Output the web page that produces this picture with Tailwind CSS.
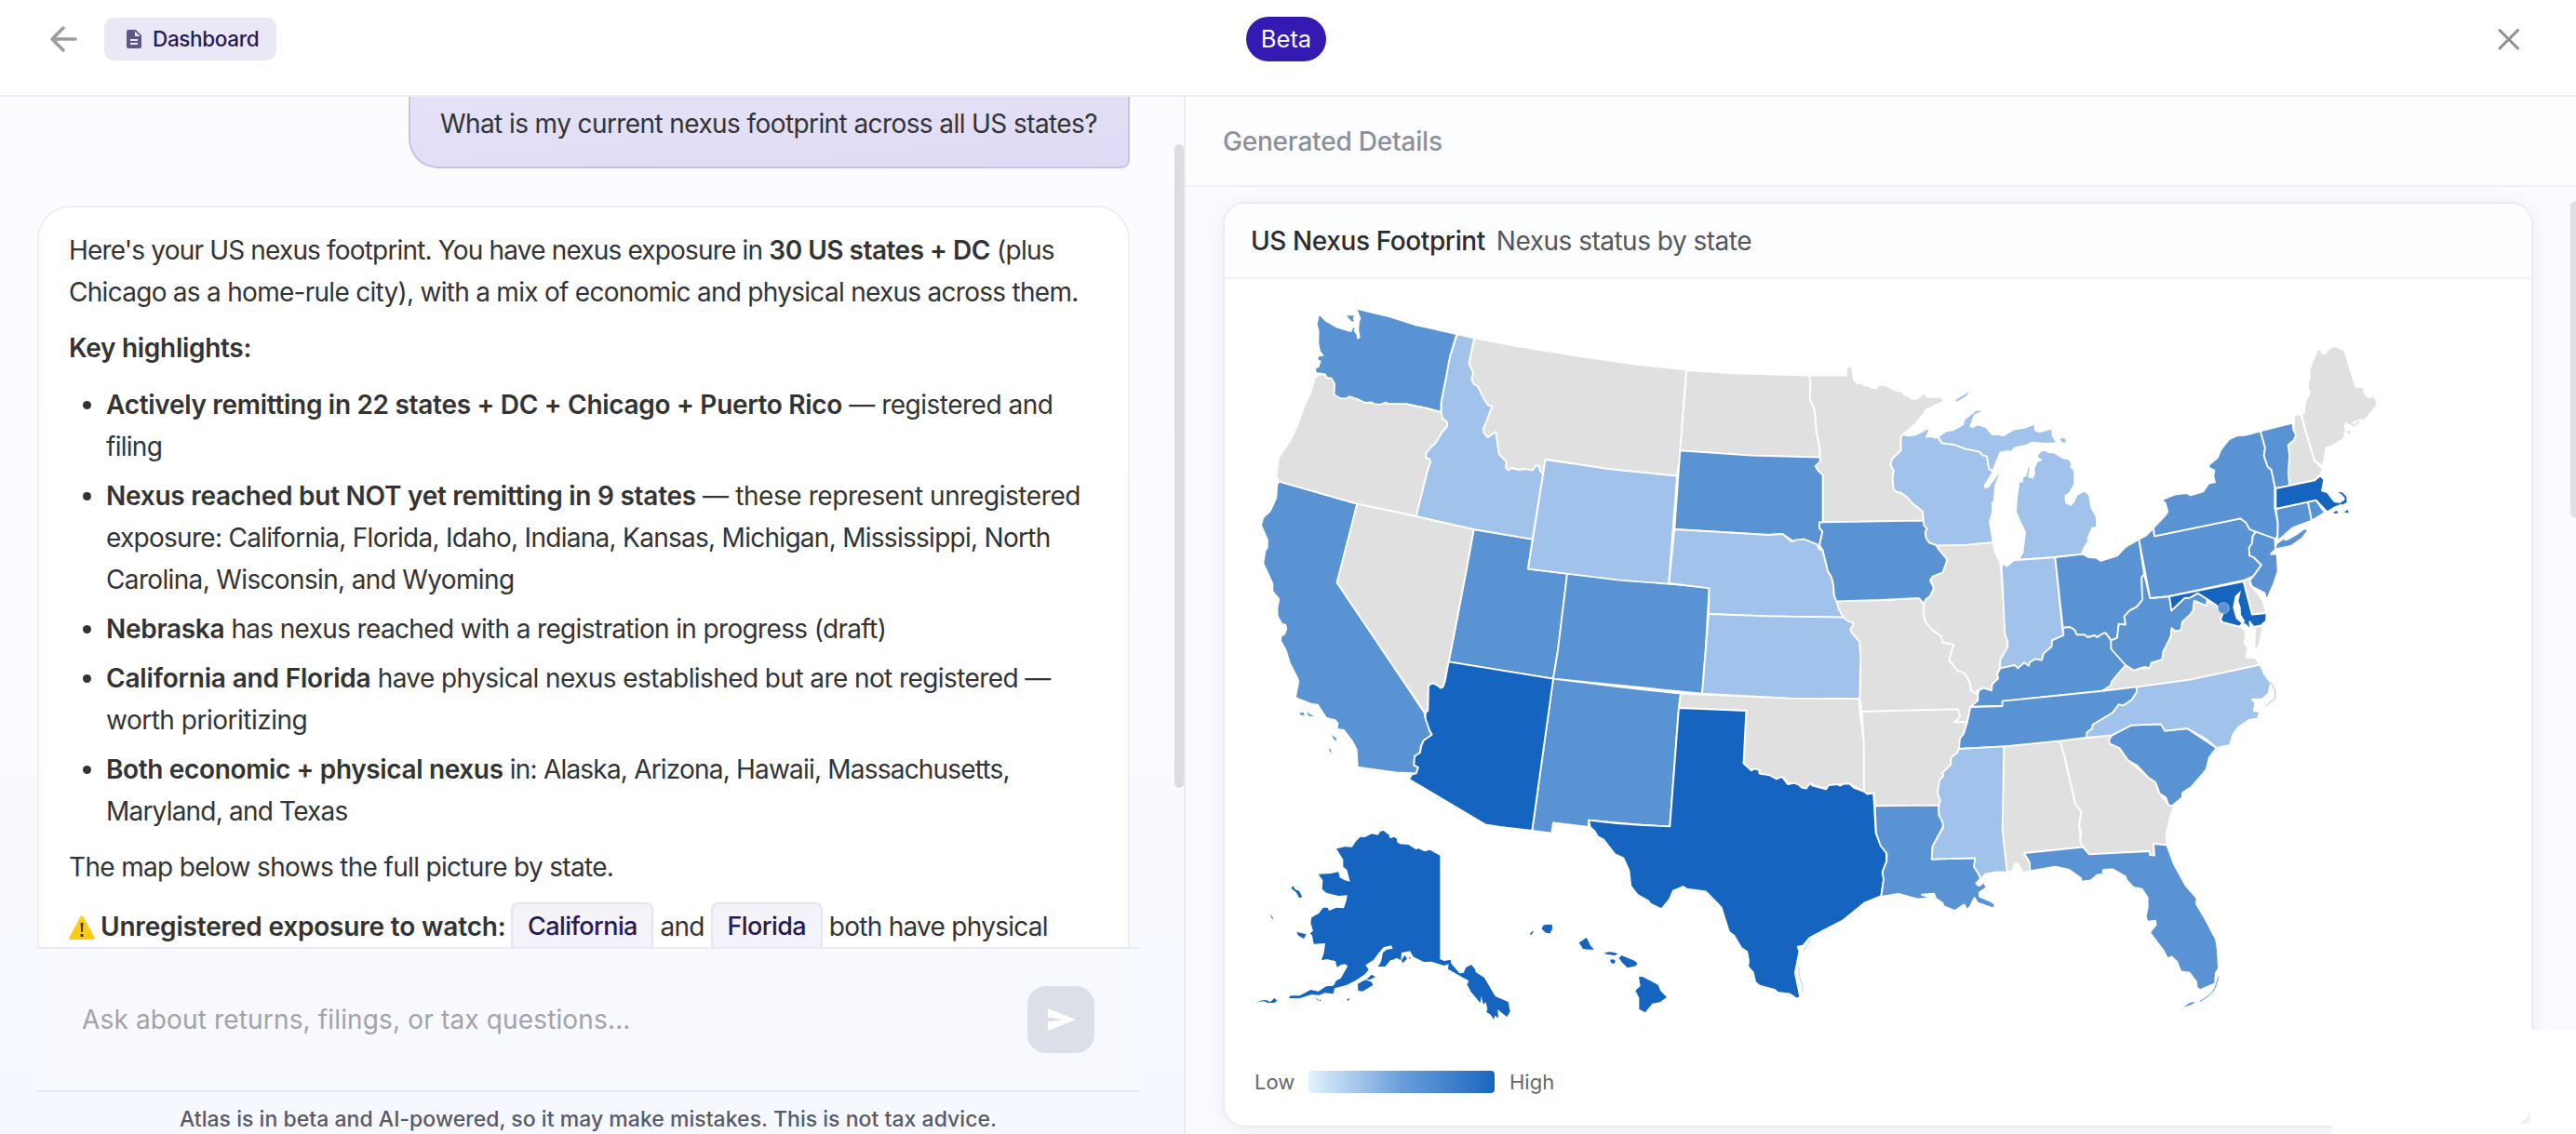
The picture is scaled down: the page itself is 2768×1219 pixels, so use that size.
<!DOCTYPE html>
<html lang="en">
<head>
  <meta charset="UTF-8" />
  <meta name="viewport" content="width=device-width, initial-scale=1" />
  <title>Atlas - US Nexus Footprint</title>
  <script src="https://cdn.jsdelivr.net/npm/@tailwindcss/browser@4"></script>
</head>
<body class="h-[1219px] w-[2768px] overflow-hidden bg-white font-['Inter','Liberation_Sans',sans-serif] text-[28px] text-[#333333] flex flex-col">
  <header class="relative h-[104px] shrink-0 border-b-2 border-[#eeeeee] bg-white flex items-start justify-between pl-[52px] pr-[59px] pt-[18px]">
    <div class="flex items-center gap-[28px]">
      <svg class="w-8 h-12" viewBox="0 0 32 48" fill="none" stroke="#9b9ba1" stroke-width="3.500" stroke-linecap="round" stroke-linejoin="round"><path d="M29 24H4M16 12L4 24l12 12" /></svg>
      <a class="flex h-[46px] w-[185px] items-center gap-[12px] rounded-[10px] bg-[#eae7f6] pl-6 text-[22.5px] font-medium text-[#241b58]">
        <svg class="w-4 h-5 shrink-0" viewBox="0 0 16 20"><path fill="#5f5785" fill-rule="evenodd" d="M2 0h8l6 6v12a2 2 0 0 1-2 2H2a2 2 0 0 1-2-2V2a2 2 0 0 1 2-2zM9 1.500V7h5.500zM4 10v2h8v-2zM4 14v2h8v-2z" /></svg>
        <span class="tracking-[-0.35px]">Dashboard</span>
      </a>
    </div>
    <span class="absolute left-[1339px] top-[18px] flex h-12 w-[86px] items-center justify-center rounded-full bg-[#3519b3] text-[25.5px] text-white">Beta</span>
    <svg class="w-[27px] h-12" viewBox="0 0 27 48" fill="none" stroke="#8d8d93" stroke-width="3" stroke-linecap="round"><path d="M4 14.500l19.500 19.500M23.500 14.500L4 34" /></svg>
  </header>

  <main class="flex min-h-0 flex-1">
    <!-- chat -->
    <section class="relative flex w-[1274px] shrink-0 flex-col border-r-2 border-[#ebebef] bg-linear-to-b from-[#fcfcff] via-[#fafbff] to-[#f5f8ff] pl-10">
      <div class="flex h-[914px] shrink-0 flex-col overflow-hidden">
        <div class="ml-[399px] h-[77px] w-[775px] shrink-0 rounded-bl-[32px] rounded-br-[9px] border-2 border-t-0 border-[#c8c1ee] bg-linear-to-br from-[#e5e2f7] to-[#dfdbf5] pl-[32px] pt-[7px] leading-[44.800px]">
          <p class="whitespace-nowrap tracking-[-0.59px]">What is my current nexus footprint across all US states?</p>
        </div>
        <div class="mt-[40px] h-[900px] w-[1174px] shrink-0 rounded-[36px] border-2 border-[#efefef] bg-white px-8 pt-[24px] leading-[44.800px] tracking-[-0.72px] whitespace-nowrap">
          <p><span class="tracking-[-0.83px]">Here's your US nexus footprint. You have nexus exposure in</span> <b class="font-semibold tracking-[-0.5px]">30 US states + DC</b> (plus<br />Chicago as a home-rule city), with a mix of economic and physical nexus across them.</p>
          <p class="mt-[15px] font-semibold tracking-[-0.3px]">Key highlights:</p>
          <ul class="mt-[17px] flex flex-col gap-[8.400px] pl-10 list-disc">
            <li><b class="font-semibold tracking-[-0.3px]">Actively remitting in 22 states + DC + Chicago + Puerto Rico</b> <span class="tracking-[-0.5px]">— registered and</span><br />filing</li>
            <li><b class="font-semibold tracking-[-0.26px]">Nexus reached but NOT yet remitting in 9 states</b> <span class="tracking-[-0.42px]">— these represent unregistered</span><br />exposure: California, Florida, Idaho, Indiana, Kansas, Michigan, Mississippi, North<br /><span class="tracking-[-0.65px]">Carolina, Wisconsin, and Wyoming</span></li>
            <li><b class="font-semibold tracking-[-0.3px]">Nebraska</b> <span class="tracking-[-0.65px]">has nexus reached with a registration in progress (draft)</span></li>
            <li><b class="font-semibold tracking-[-0.18px]">California and Florida</b> <span class="tracking-[-0.58px]">have physical nexus established but are not registered —</span><br /><span class="tracking-[-0.5px]">worth prioritizing</span></li>
            <li><b class="font-semibold tracking-[-0.36px]">Both economic + physical nexus</b> <span class="tracking-[-0.8px]">in: Alaska, Arizona, Hawaii, Massachusetts,<br />Maryland, and Texas</span></li>
          </ul>
          <p class="mt-[15px] tracking-[-0.67px]">The map below shows the full picture by state.</p>
          <div class="mt-[15px] flex items-center">
            <svg class="mr-[6px] w-[28px] h-[26px]" viewBox="0 0 28 26"><path fill="#ffcc12" d="M12.700 1q1.300-1.800 2.600 0L27.500 23.500q.8 2.300-1.500 2.500H2Q-.3 25.800.5 23.500z" /><path fill="#333" d="M12.600 8h2.800l-.5 10h-1.800zM12.600 20h2.800v3h-2.800z" /></svg>
            <b class="font-semibold tracking-[-0.18px]">Unregistered exposure to watch:</b>
            <span class="ml-[6px] flex h-[54px] w-[153px] items-center justify-center rounded-lg border-2 border-[#e6e4ee] bg-[#f5f3fa] text-[27px] font-medium tracking-[-0.6px] text-[#241b58]">California</span>
            <span class="ml-[7px]">and</span>
            <span class="ml-[7px] flex h-[54px] w-[120px] items-center justify-center rounded-lg border-2 border-[#e6e4ee] bg-[#f5f3fa] text-[27px] font-medium tracking-[-0.6px] text-[#241b58]">Florida</span>
            <span class="ml-[7px]">both have physical</span>
          </div>
        </div>
      </div>
      <form class="flex h-[156px] w-[1184px] shrink-0 items-center justify-between border-y-2 border-[#e9ecf5] bg-[#f7f9ff] pl-12 pr-[48px]">
        <span class="tracking-[0.150px] text-[#a3a3a8]">Ask about returns, filings, or tax questions...</span>
        <button type="button" class="flex h-[72px] w-[72px] items-center justify-center rounded-[20px] bg-[#dddfe8]">
          <svg class="ml-[2px] w-[30px] h-6" viewBox="0 0 30 24"><path fill="#fff" d="M0 0l30 12L0 24v-9.500L16 12 0 9.500z" /></svg>
        </button>
      </form>
      <p class="w-[1184px] pt-[11px] text-center text-[23px] leading-[36px] font-medium tracking-[0.030px] text-[#5a5a64]">Atlas is in beta and AI-powered, so it may make mistakes. This is not tax advice.</p>
      <div class="absolute right-0 top-[51px] h-[692px] w-[10px] rounded-full bg-[#dcdddf]"></div>
    </section>

    <!-- generated details -->
    <section class="relative flex min-w-0 flex-1 flex-col bg-[#fafbff]">
      <h2 class="flex h-[97px] shrink-0 items-center border-b-2 border-[#f0f0f2] bg-[#fcfdff] pl-10 font-medium tracking-[-0.2px] text-[#8f8f9c]">Generated Details</h2>
      <div class="ml-10 mt-4 flex h-[995px] w-[1408px] shrink-0 flex-col overflow-hidden rounded-[24px] border-2 border-[#ededf0] bg-white shadow-[0_2px_20px_rgba(40,40,90,0.06)]">
        <div class="flex h-[81px] shrink-0 items-center gap-[12px] border-b-2 border-[#f0f0f2] bg-[#fcfdff] pl-7">
          <h3 class="font-medium tracking-[-0.4px] text-[#2c2c30]">US Nexus Footprint</h3>
          <span class="tracking-[-0.5px] text-[#55555c]">Nexus status by state</span>
        </div>
        <svg class="block w-[1402px] h-[810px] shrink-0" viewBox="-72 3 4206 2430" stroke="#ffffff" stroke-width="5.500" stroke-linejoin="round">
          <!-- north west -->
          <g fill="#5a93d4">
            <path d="M102 655L250 698 355 728 290 982 437 1200 572 1402 575 1420 585 1440 588 1460 596 1472 590 1480 570 1490 560 1510 558 1530 540 1542 538 1570 552 1578 545 1597 480 1594 356 1577 353 1520 340 1495 312 1458 290 1455 292 1435 285 1426 255 1418 240 1395 228 1376 210 1374 160 1355 156 1350 166 1300 160 1285 137 1240 125 1200 108 1170 109 1155 120 1148 127 1132 124 1118 112 1115 98 1090 97 1065 103 1035 82 1010 82 985 52 920 58 880 65 870 66 845 45 796 52 772 75 750 94 708 96 670Z" />
            <path stroke="none" d="M170 1402l12-1 3 8-12 0zM191 1399l14 8 11 5-16 0zM273 1473l14 10 0 10-7-6zM265 1515l4 4 4 13-8-9z" />
            <path d="M352 98L400 110 460 124 540 150 676 180 655 250 640 330 626 400 626 432 580 420 515 406 452 405 448 401 428 408 410 406 402 401 380 402 355 390 330 382 322 390 300 388 280 376 280 340 272 324 256 320 252 310 235 307 225 308 219 298 221 288 230 286 236 268 226 264 228 250 244 249 234 236 229 210 230 170 224 150 230 120 236 118 255 138 290 158 335 171 340 158 350 152 347 170 355 180 357 194 362 190 358 168 360 140 364 130Z" />
            <path stroke="none" d="M321 121l24 0-4 8 4 11-9-2-6-7z" />
            <path d="M731 810L920 842 906 938 1032 953 1002 1200 987 1292 650 1237 675 1110Z" />
            <path d="M1032 953L1359 986 1490 998 1478 1200 1467 1340 987 1292 1002 1200Z" />
            <path d="M987 1292L1200 1318 1398 1340 1392 1386 1363 1768 1277 1764 1101 1748 1101 1770 987 1756 982 1790 919 1782Z" />
          </g>
          <g fill="#e0e0e0">
            <path d="M219 320L235 310 252 312 256 322 272 324 282 340 280 376 300 388 322 388 330 382 355 390 380 402 402 401 410 406 428 408 448 401 452 405 515 406 580 420 626 434 630 452 645 464 645 478 628 498 608 532 592 546 578 564 576 579 586 582 592 592 582 620 545 768 355 728 250 698 102 655 94 640 101 580 140 522 165 468 186 408 204 370Z" />
            <path d="M355 728L545 768 731 810 700 980 650 1237 638 1300 632 1318 624 1322 612 1312 598 1306 585 1314 583 1395 574 1402 437 1200 290 982Z" />
            <path d="M734 193L860 218 1060 250 1240 276 1416 296 1397 556 1386 638 1170 616 962 585 954 632 944 620 940 604 930 606 920 620 895 615 875 618 852 612 842 620 834 612 836 592 812 568 802 496 776 514 762 498 762 485 790 414 778 410 765 392 743 348 731 342 724 325 729 305 715 275Z" />
          </g>
          <g fill="#a0c2eb">
            <path d="M678 181L732 193 715 275 729 305 724 325 731 342 743 348 765 392 778 410 790 414 762 485 762 498 776 514 802 496 812 568 836 592 834 612 842 620 852 612 875 618 895 615 920 620 930 606 940 604 944 620 954 632 920 842 731 810 545 768 582 620 592 592 586 582 576 579 578 564 592 546 608 532 628 498 645 478 645 464 630 452 626 434 626 400 640 330 655 250Z" />
            <path d="M962 585L1170 616 1386 638 1359 986 1200 974 1030 953 906 938Z" />
          </g>
          <path fill="#1565c0" d="M650 1237L987 1292 919 1782 816 1770 768 1762 522 1616 532 1600 545 1597 552 1578 538 1570 540 1542 558 1530 562 1508 570 1490 596 1472 588 1458 575 1420 575 1402 583 1395 585 1314 598 1306 612 1312 624 1322 632 1318 638 1300Z" />

          <!-- plains and upper midwest -->
          <g transform="translate(1200 120)">
            <g fill="#e0e0e0">
              <path d="M217 177L370 187 612 194 617 215 614 270 630 305 636 380 646 425 647 458 425 452 196 436Z" />
              <path d="M612 194L732 194 733 162 750 167 757 210 765 218 785 220 787 226 808 228 812 234 828 234 838 224 862 227 890 242 912 246 918 255 935 262 945 270 960 268 978 254 988 254 992 264 1036 262 1042 270 1062 268 1040 280 990 304 960 345 915 384 908 392 908 436 880 462 874 482 885 500 881 520 884 560 895 570 908 572 930 588 945 606 978 632 980 662 656 667 656 515 640 500 632 486 647 472 646 425 636 380 630 305 614 270 617 215Z" />
              <path d="M700 922L845 918 965 912 982 930 980 960 988 990 1010 1015 1038 1035 1042 1054 1078 1062 1063 1112 1090 1145 1115 1155 1130 1185 1135 1210 1156 1223 1152 1250 1132 1263 1122 1310 1080 1312 1098 1295 1092 1270 782 1278 775 1235 778 1100 774 1052 750 1025 744 1012 754 998 752 990 740 988 722 974 706 945Z" />
              <path d="M1024 742L1120 740 1205 732 1208 755 1228 798 1246 1000 1243 1030 1253 1045 1252 1070 1228 1110 1225 1138 1217 1158 1223 1170 1202 1190 1202 1210 1175 1202 1152 1210 1156 1223 1135 1210 1130 1185 1115 1155 1090 1145 1063 1112 1078 1062 1042 1054 1038 1035 1010 1015 988 990 980 960 982 930 988 915 1000 908 1012 885 1012 875 1002 855 1010 842 1042 830 1055 795 1055 785 1030 755Z" />
            </g>
            <g fill="#5a93d4">
              <path d="M196 436L425 452 647 458 647 472 632 486 640 500 656 515 656 665 645 668 645 685 655 698 645 740 645 755 636 738 595 722 560 728 526 705 480 708 178 690Z" />
              <path d="M656 667L980 662 983 678 993 688 986 700 990 720 1000 733 1020 740 1030 755 1055 785 1055 795 1042 830 1010 842 1002 855 1012 875 1012 885 1000 908 988 915 982 930 965 912 845 918 700 922 692 905 690 870 684 845 672 825 655 757 645 740 655 698 645 685 645 668Z" />
            </g>
            <g fill="#a0c2eb">
              <path d="M178 690L480 708 526 705 556 730 570 724 595 722 636 738 645 755 655 757 672 825 684 845 690 870 692 905 700 922 706 945 722 974 480 970 288 963 290 880 160 864Z" />
              <path d="M288 963L480 970 722 974 740 988 752 990 754 998 744 1012 750 1025 774 1052 778 1100 775 1236 548 1235 267 1220Z" />
              <path d="M915 384L930 388 955 385 995 364 1000 372 990 392 1005 390 1018 395 1026 393 1040 412 1080 417 1115 430 1162 440 1170 450 1185 455 1192 495 1205 505 1178 548 1180 556 1190 552 1235 490 1212 550 1208 600 1202 605 1204 632 1194 665 1205 732 1120 740 1024 742 1020 740 1000 733 990 720 986 700 993 688 983 678 980 662 978 632 945 606 930 588 908 572 895 570 884 560 881 520 885 500 874 482 880 462 908 436 908 392Z" />
              <path d="M1028 390L1056 372 1075 370 1108 352 1112 335 1150 305 1172 306 1168 312 1145 322 1132 358 1140 360 1155 352 1182 360 1202 384 1225 384 1238 388 1270 368 1308 362 1338 350 1342 372 1355 375 1395 365 1397 390 1408 405 1415 408 1405 412 1372 414 1330 410 1310 420 1275 427 1262 442 1255 438 1228 442 1205 500 1192 495 1185 455 1170 450 1162 440 1115 430 1080 417 1040 412Z" />
              <path stroke="none" d="M1084 274L1108 258 1128 246 1120 258 1098 273 1086 278ZM1420 398l13-3 7 8-3 8-10-2z" />
            </g>
          </g>

          <!-- south west -->
          <g transform="translate(420 1020) scale(1.0714 1)">
            <path fill="#e0e0e0" d="M913 320L1240 335 1450 336 1452 380 1465 480 1465 636 1420 610 1385 612 1350 628 1303 610 1290 626 1240 612 1220 590 1200 595 1150 578 1150 566 1120 562 1102 545 1110 375 907 366Z" />
            <path fill="#1565c0" d="M907 366L1110 375 1102 545 1120 562 1125 568 1135 562 1148 566 1150 578 1180 583 1200 595 1218 588 1235 612 1255 608 1270 615 1275 622 1290 626 1303 608 1308 616 1350 628 1358 615 1385 612 1392 617 1402 611 1420 610 1435 624 1465 636 1475 644 1493 640 1500 770 1515 805 1532 835 1532 860 1520 900 1525 910 1516 972 1465 995 1400 1052 1340 1085 1300 1108 1282 1132 1265 1136 1270 1150 1257 1220 1272 1298 1262 1304 1240 1288 1205 1284 1195 1275 1150 1262 1137 1250 1130 1218 1115 1200 1117 1180 1112 1152 1095 1140 1073 1100 1058 1088 1035 1010 1022 995 988 958 932 950 920 942 890 956 880 982 855 1015 822 998 815 988 782 968 762 940 757 890 740 850 715 838 680 790 662 780 655 765 640 750 636 728 720 738 800 744 880 748Z" />
            <path fill="none" stroke="#7ea6d9" stroke-width="1.500" d="M1305 1112l-22 36M1268 1200q0 40 10 55l3 30" />
          </g>

          <!-- great lakes to new england -->
          <g transform="translate(2160 150)">
            <g fill="#a0c2eb">
              <path d="M326 758L340 735 348 670 318 604 322 550 328 508 340 505 338 492 350 486 357 458 366 458 360 490 372 494 378 480 376 462 388 440 400 436 388 430 388 418 408 402 425 412 440 412 470 430 490 434 500 450 495 458 507 470 508 515 490 545 478 552 480 575 495 582 505 570 515 548 540 535 555 550 562 590 578 620 580 655 565 655 550 690 552 700 538 720 530 740 445 750Z" />
              <path d="M272 770L290 778 312 760 445 750 468 978 472 1002 435 1018 434 1038 408 1060 402 1082 382 1078 362 1090 360 1100 345 1090 325 1108 315 1098 268 1108 268 1080 292 1040 292 1022 283 998Z" />
            </g>
            <g fill="#e0e0e0">
              <path d="M893 890L933 906 938 892 965 905 985 935 978 955 1040 972 1056 985 1060 1000 1055 1025 1068 1045 1060 1072 1090 1075 1105 1098 880 1145 710 1168 595 1182 622 1165 628 1150 655 1118 672 1098 700 1115 718 1108 750 1108 755 1090 790 1080 793 1055 818 1005 820 978 832 988 850 985 855 958 890 920Z" />
              <path d="M1090 975L1117 970 1105 1020 1104 1032 1094 1050 1087 1040Z" />
              <path d="M1216 292L1236 288 1260 370 1282 440 1305 462 1303 480 1282 500 1200 520 1197 480 1200 420 1196 388 1215 372 1221 355 1213 340Z" />
              <path d="M1240 286L1248 286 1250 252 1266 218 1260 208 1260 182 1265 175 1265 145 1290 80 1302 80 1306 92 1315 94 1325 80 1343 68 1378 82 1413 200 1440 202 1442 222 1458 236 1468 228 1482 245 1480 265 1440 310 1428 306 1422 312 1408 314 1400 330 1382 318 1378 330 1385 345 1378 350 1376 368 1335 392 1318 398 1312 440 1306 462 1300 450 1282 440 1260 370 1238 286Z" />
              <path stroke="none" d="M1388 344l7-3 2 8-7 6zM1402 322l10-4 3 6-10 6zM1415 314l12-3-4 9-7 2z" />
              <path d="M1052 825L1072 818 1075 840 1100 870 1115 890 1125 930 1080 935Z" />
            </g>
            <g fill="#5a93d4">
              <path d="M445 750L535 740 552 750 578 752 592 762 645 745 670 718 715 692 732 805 724 815 726 888 708 910 685 922 668 940 672 968 650 965 645 1010 625 1018 608 995 600 995 580 1008 572 1002 550 1008 540 1000 515 1000 508 985 492 975 470 978Z" />
              <path d="M470 978L492 975 508 985 515 1000 540 1000 550 1008 572 1002 580 1008 600 995 608 995 625 1018 628 1045 672 1098 655 1118 628 1150 622 1165 595 1182 275 1215 275 1230 172 1232 196 1212 196 1193 200 1178 215 1172 240 1180 242 1160 262 1140 258 1128 268 1108 315 1098 325 1108 345 1090 360 1100 362 1090 382 1078 402 1082 408 1060 434 1038 435 1018 472 1002Z" />
              <path d="M732 805L751 882 813 876 820 922 862 882 880 880 905 866 935 885 933 906 893 890 890 920 880 935 855 958 850 985 832 988 820 978 818 1005 793 1055 790 1080 755 1090 750 1108 735 1104 718 1108 700 1115 672 1098 640 1062 625 1045 625 1018 645 1010 650 965 672 968 668 940 685 922 708 910 726 888 724 815Z" />
              <path d="M715 692L738 680 762 655 765 682 1042 625 1060 638 1072 660 1092 668 1082 682 1080 705 1070 720 1072 745 1085 750 1110 775 1085 810 1052 825 813 876 751 882Z" />
              <path d="M762 655L800 615 808 602 800 575 788 565 830 548 868 543 882 550 922 538 940 512 960 508 955 490 958 470 942 462 940 452 968 430 980 402 1005 370 1030 358 1060 356 1107 343 1122 398 1118 422 1130 458 1142 468 1153 520 1153 590 1163 640 1162 680 1156 692 1092 668 1072 660 1060 638 1042 625 765 682Z" />
              <path d="M1155 724L1158 706 1180 690 1190 694 1220 678 1248 658 1262 662 1240 690 1205 714Z" />
              <path d="M1107 343L1210 317 1213 340 1221 355 1215 372 1196 388 1200 420 1197 480 1200 520 1156 528 1153 520 1142 468 1130 458 1118 422 1122 398Z" />
              <path d="M1156 594L1260 572 1272 632 1210 655 1162 698 1163 640Z" />
              <path d="M1260 572L1286 566 1314 606 1272 632Z" />
              <path d="M1092 668L1153 690 1155 725 1140 740 1160 740 1163 795 1148 840 1130 880 1125 886 1120 865 1080 845 1072 825 1085 810 1110 775 1085 750 1072 745 1070 720 1080 705 1082 682Z" />
            </g>
            <g fill="#1565c0">
              <path d="M1156 528L1282 502 1300 487 1312 500 1305 535 1322 540 1345 570 1372 574 1378 560 1360 542 1375 542 1385 560 1382 575 1345 590 1322 604 1286 566 1156 594Z" />
              <path stroke="none" d="M1356 541l14 0 14 14 1 18-16 8-4-8 12-6 2-8-10-12zM1340 607l12-7 6 6-8 3zM1376 605l12-8 4 10z" />
              <path d="M813 876L1052 828 1080 935 1127 930 1125 955 1108 970 1085 975 1072 958 1075 985 1062 970 1048 962 1040 974 985 960 978 950 985 935 965 905 935 885 905 866 880 880 862 882 820 922Z" />
            </g>
            <path fill="#ffffff" stroke="none" d="M1044 857L1025 875 1018 912 1028 948 1045 962 1058 958 1044 935 1043 912 1036 890Z" />
            <circle cx="988" cy="914" r="18" fill="#5a93d4" stroke="#b9d2f0" stroke-width="2" />
          </g>

          <!-- south east -->
          <g transform="translate(1920 1140)">
            <g fill="#e0e0e0">
              <path d="M62 258L372 250 378 275 360 292 402 292 390 330 378 345 378 372 370 390 350 405 348 430 322 455 325 465 312 480 306 520 315 545 310 560 104 562 102 520 80 522 69 512 68 360Z" />
              <path d="M520 370L700 352 715 400 750 555 770 580 762 625 768 675 775 695 585 714 603 745 604 772 580 778 565 748 555 748 548 772 530 775 515 638Z" />
              <path d="M700 352L868 334 858 350 862 362 892 375 920 415 985 470 1008 485 1022 522 1050 558 1068 566 1055 600 1043 655 1045 688 1002 684 1005 722 990 720 990 708 795 718 775 695 765 675 770 650 762 625 770 580 750 555 715 400Z" />
            </g>
            <g fill="#5a93d4">
              <path d="M412 243L515 240 515 224 830 192 948 178 948 195 932 220 905 238 890 235 870 262 806 300 805 312 788 325 785 342 700 352 520 370 375 378 378 345 390 330 402 290Z" />
              <path d="M868 334L930 302 1025 298 1040 320 1110 312 1205 375 1182 405 1172 445 1125 500 1095 520 1095 535 1062 562 1050 558 1042 535 1022 522 1008 485 985 470 950 432 920 415 892 375 862 362 858 350Z" />
              <path d="M104 562L310 560 310 590 325 615 322 632 290 692 287 734 427 730 425 758 445 795 430 812 440 820 456 808 464 825 440 842 442 855 475 868 492 880 485 892 435 875 425 858 412 885 400 898 392 880 362 900 325 885 322 875 300 860 295 845 255 848 285 860 240 862 180 846 124 855 132 800 128 775 142 740 142 715 122 690 108 650Z" />
              <path d="M585 714L775 695 795 718 990 708 990 720 1005 722 1002 684 1045 688 1068 750 1105 818 1142 860 1140 878 1165 920 1203 992 1208 1020 1212 1085 1203 1100 1200 1135 1152 1155 1142 1148 1140 1130 1118 1100 1090 1096 1078 1065 1060 1048 1048 1055 1035 1030 990 970 1010 945 1008 932 985 935 988 955 977 918 983 890 983 858 965 830 938 825 915 800 912 790 870 766 840 768 838 782 820 785 800 802 770 806 768 795 730 768 685 758 604 772 603 745Z" />
              <path stroke="none" d="M1098 1212l20-15 18-4-10 9z" />
              <path fill="none" stroke="#5a93d4" stroke-width="3" d="M1152 1192q35-18 48-42l12-38" />
            </g>
            <g fill="#a0c2eb">
              <path d="M375 378L520 370 515 640 530 776 495 775 460 782 445 797 438 780 423 758 427 730 287 734 290 692 325 630 322 615 310 590 310 560 315 545 306 520 312 480 325 465 322 455 348 430 350 405 370 390Z" />
              <path d="M948 178L1120 155 1346 107 1360 138 1380 165 1372 200 1352 218 1320 218 1330 230 1325 255 1345 258 1338 280 1310 285 1275 308 1258 332 1248 366 1205 375 1170 345 1110 312 1040 320 1025 298 930 302 868 334 785 342 788 325 805 312 806 300 870 262 890 235 905 238 932 220 948 195Z" />
              <path fill="none" stroke="#a0c2eb" stroke-width="3" d="M1378 162L1394 188 1394 215 1365 240" />
            </g>
          </g>

          <!-- alaska and hawaii -->
          <g transform="translate(-30 1710)" fill="#1565c0" stroke="none">
            <path d="M318 130L345 124 368 125 382 105 395 92 410 93 432 82 452 86 460 74 470 72 488 86 490 97 505 92 513 98 513 108 522 115 550 117 575 133 582 129 602 139 620 134 652 152 652 486 665 492 686 488 688 500 715 532 728 530 736 512 753 504 765 518 767 528 795 546 830 606 872 624 878 655 868 672 855 662 838 648 840 676 828 668 826 682 815 665 801 656 805 648 800 625 792 632 784 605 782 628 752 592 739 568 745 556 720 542 678 518 680 502 665 507 625 494 600 495 565 478 556 460 528 465 526 490 512 482 500 488 492 490 475 510 452 510 462 495 468 465 480 455 500 452 495 442 470 448 455 465 438 488 412 505 422 520 410 535 380 555 350 570 312 580 308 598 280 595 262 602 238 600 200 612 164 612 170 604 200 604 235 585 260 590 285 574 308 572 318 555 332 548 355 508 345 502 332 505 320 512 315 492 302 490 288 486 270 490 278 465 282 435 245 437 240 410 233 403 243 395 235 370 238 352 262 338 275 320 290 320 294 330 318 320 342 322 350 298 353 280 325 282 285 272 272 260 274 232 260 212 300 210 325 205 328 222 345 232 362 236 352 198 340 188 340 165Z" />
            <path d="M172 258L178 250 186 262 198 266 208 286 198 288 188 270ZM105 342l4 4 6 12-4-2zM190 398l14 4 17 4-8 14-18-10zM387 566L400 558 412 553 432 560 436 570 402 590 388 588ZM415 552l16-16 13 7-16 8zM57 629q20-16 42-8l5 4 14-13 9 8-10 7-20 0-12-5q-16 0-28 7zM250 610l8 6 0 4zM262 616l8 2-6 4zM352 617l4-5 4 5-4 4z" />
            <path d="M528 490l10-16 3 3 5 8-15 14zM552 480l6 0-3 6z" />
            <path d="M941 404l10-9 3 2-8 11zM979 388l8-12 25-2 3 12-8 17-14-2zM1100 433l12-8 12-9 14 28 11 11-18 0-18-2zM1181 465l22-2 22 5-8 6-26-3zM1200 488l12-1 6 6-6 9-9-5zM1229 482l8-8 42 17 9 8-4 9-28 6-18-18zM1293 543l12 0 50 26 8 20 20 20-22 16-24 4-24 29-19-11 0-36-12-24 16-14z" />
          </g>
        </svg>
        <div class="flex h-[106px] shrink-0 items-center pl-8 text-[22px] text-[#666666]">
          <span class="w-[58px]">Low</span>
          <span class="h-6 w-[200px] rounded bg-linear-to-r from-[#e3f2fd] via-[#6a9edb] to-[#1565c0]"></span>
          <span class="ml-[16px]">High</span>
        </div>
      </div>
      <div class="absolute right-0 top-[112px] h-[341px] w-[6px] rounded-l-full bg-[#dfe0e3]"></div>
      <div class="absolute right-0 bottom-0 h-[112px] w-[49px] bg-white"></div>
      <div class="absolute right-0 bottom-0 h-[11px] w-[262px] bg-white"></div>
    </section>
  </main>
</body>
</html>
